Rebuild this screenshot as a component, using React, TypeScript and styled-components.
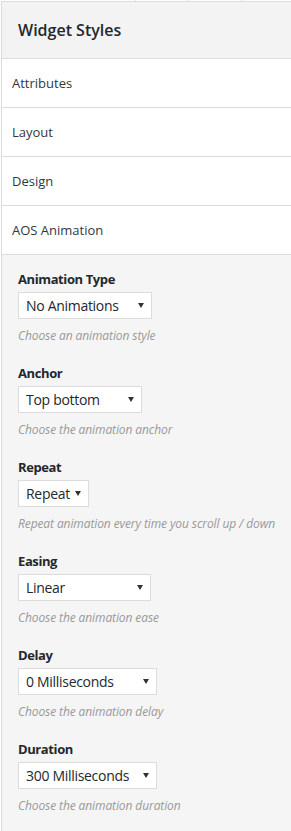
import styled, { createGlobalStyle } from "styled-components";

const GlobalStyle = createGlobalStyle`
  html, body {
    margin: 0;
    padding: 0;
    background: #fff;
  }
  body {
    font-family: "Open Sans", "Noto Sans", sans-serif;
    color: #23282d;
  }
`

const TabEdges = styled.div`
  display: flex;
  height: 1px;
`
const TabEdge = styled.div<{ $w: number }>`
  width: ${p => p.$w}px;
  flex: none;
  border-right: 1px solid #e2e2e2;
  box-sizing: border-box;
`
const Panel = styled.div`
  margin-left: 1px;
  border: 1px solid #dcdcdc;
  border-right: none;
`
const Header = styled.h3`
  margin: 0;
  height: 56px;
  display: flex;
  align-items: center;
  padding: 0 16px;
  background: #f3f3f3;
  border-bottom: 1px solid #dcdcdc;
  font-size: 16px;
  font-weight: 600;
  color: #23282d;
`
const SectionRow = styled.div`
  height: 48px;
  display: flex;
  align-items: center;
  padding: 0 10px;
  background: #fff;
  border-bottom: 1px solid #dcdcdc;
  font-size: 13px;
  color: #32373c;
`
const Body = styled.div`
  background: #f5f5f5;
  padding: 15px 16px 17px;
`
const Field = styled.div`
  & + & {
    margin-top: 20px;
  }
`
const Label = styled.label`
  display: block;
  font-size: 13px;
  line-height: 18px;
  font-weight: 700;
  letter-spacing: -0.4px;
  color: #23282d;
`
const SelectWrap = styled.div<{ $w: number }>`
  position: relative;
  width: ${p => p.$w}px;
  margin-top: 4px;
  &::after {
    content: "";
    position: absolute;
    right: 8px;
    top: 11px;
    border-left: 3px solid transparent;
    border-right: 3px solid transparent;
    border-top: 5px solid #333;
    pointer-events: none;
  }
`
const Select = styled.select`
  appearance: none;
  display: block;
  width: 100%;
  height: 27px;
  box-sizing: border-box;
  margin: 0;
  padding: 0 4px 0 7px;
  background: #fff;
  border: 1px solid #dcdcdc;
  border-radius: 0;
  font-family: "Open Sans", "Noto Sans", sans-serif;
  font-size: 14px;
  letter-spacing: -0.3px;
  color: #23282d;
  outline: none;
`
const Description = styled.p`
  margin: 9px 0 0;
  font-size: 12px;
  line-height: 16px;
  font-style: italic;
  white-space: nowrap;
  letter-spacing: -0.1px;
  color: #999;
`

type FieldDef = {
  label: string,
  value: string,
  width: number,
  description: string
}

const fields: FieldDef[] = [
  { label: "Animation Type", value: "No Animations", width: 134, description: "Choose an animation style" },
  { label: "Anchor", value: "Top bottom", width: 124, description: "Choose the animation anchor" },
  { label: "Repeat", value: "Repeat", width: 71, description: "Repeat animation every time you scroll up / down" },
  { label: "Easing", value: "Linear", width: 133, description: "Choose the animation ease" },
  { label: "Delay", value: "0 Milliseconds", width: 139, description: "Choose the animation delay" },
  { label: "Duration", value: "300 Milliseconds", width: 139, description: "Choose the animation duration" },
]

const sections = ["Attributes", "Layout", "Design", "AOS Animation"]

export default function App() {
  return (
    <>
      <GlobalStyle />
      <TabEdges>
        <TabEdge $w={136} />
        <TabEdge $w={53} />
        <TabEdge $w={53} />
      </TabEdges>
      <Panel>
        <Header>Widget Styles</Header>
        {sections.map(s => <SectionRow key={s}>{s}</SectionRow>)}
        <Body>
          {fields.map(f => (
            <Field key={f.label}>
              <Label>{f.label}</Label>
              <SelectWrap $w={f.width}>
                <Select defaultValue={f.value}>
                  <option>{f.value}</option>
                </Select>
              </SelectWrap>
              <Description>{f.description}</Description>
            </Field>
          ))}
        </Body>
      </Panel>
    </>
  )
}
